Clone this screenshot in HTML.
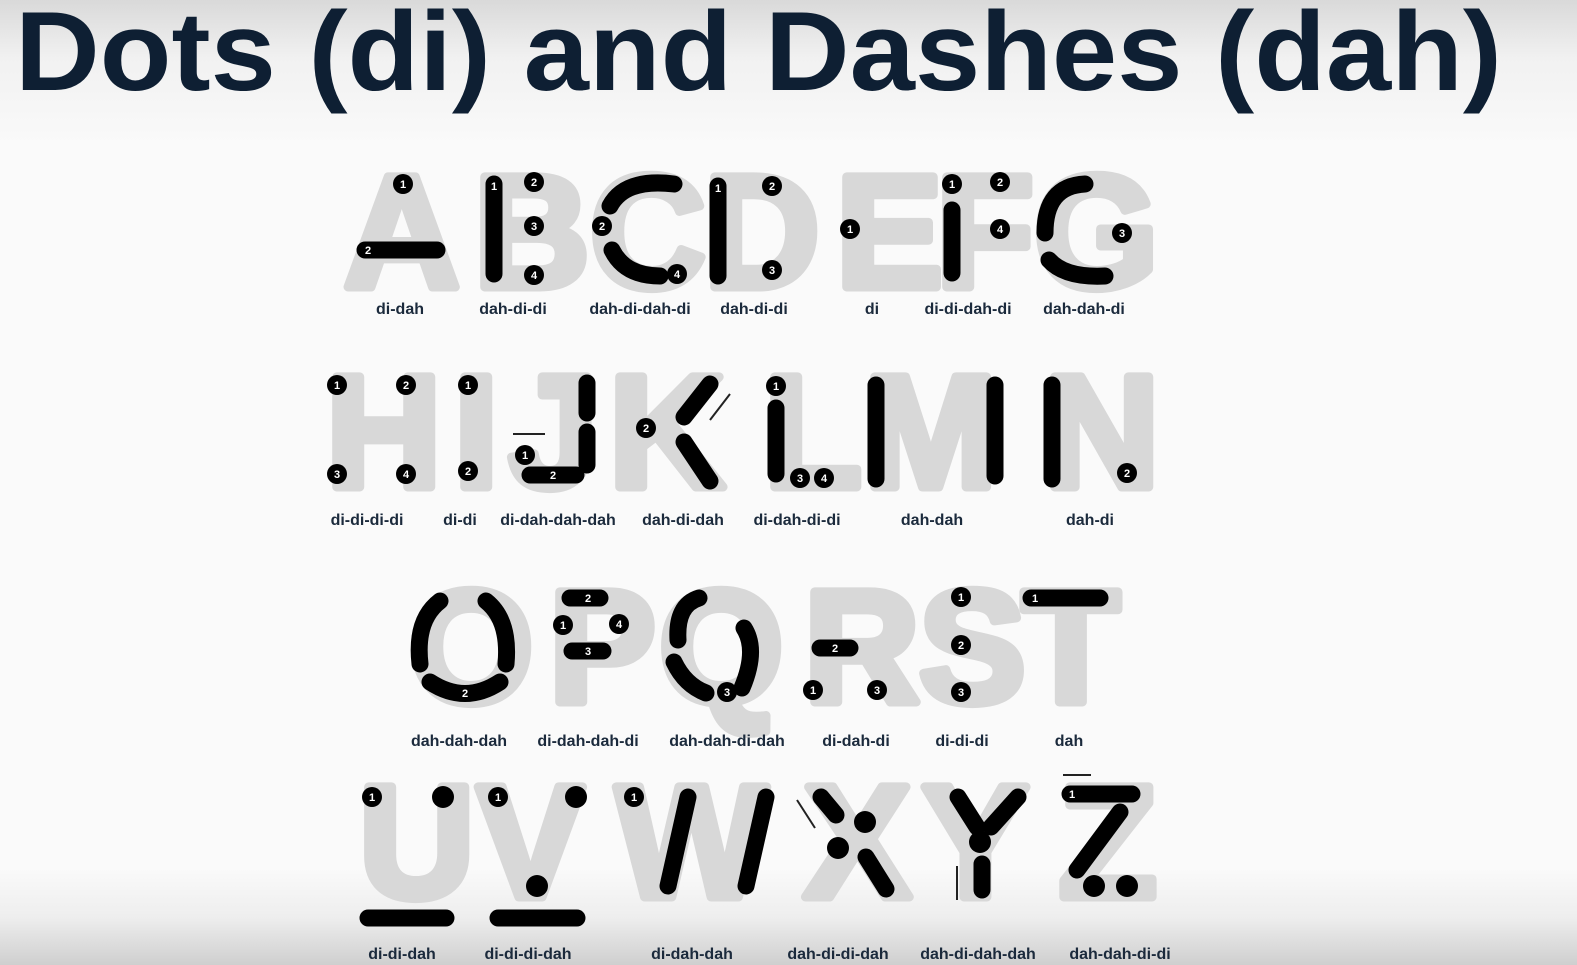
<!DOCTYPE html>
<html><head><meta charset="utf-8"><style>
html,body{margin:0;padding:0;width:1577px;height:965px;overflow:hidden;background:#f8f8f8}
svg{display:block}
</style></head><body>
<svg width="1577" height="965" viewBox="0 0 1577 965" xmlns="http://www.w3.org/2000/svg">
<defs>
<linearGradient id="bg" x1="0" y1="0" x2="0" y2="1">
<stop offset="0" stop-color="#d9d9d9"/><stop offset="0.06" stop-color="#f1f1f1"/><stop offset="0.15" stop-color="#fafafa"/>
<stop offset="0.9" stop-color="#fafafa"/><stop offset="0.95" stop-color="#eeeeee"/><stop offset="1" stop-color="#cfcfcf"/>
</linearGradient>
</defs>
<rect width="1577" height="965" fill="url(#bg)"/>
<text x="15" y="90" font-family="Liberation Sans, sans-serif" font-weight="bold" font-size="112" fill="#0e1f33" textLength="1487" lengthAdjust="spacingAndGlyphs">Dots (di) and Dashes (dah)</text>

<g font-family="Liberation Sans, sans-serif" font-weight="bold" font-size="160" fill="#d8d8d8" stroke="#d8d8d8" stroke-width="9" stroke-linejoin="round" lengthAdjust="spacingAndGlyphs">
<text x="344" y="287" textLength="118">A</text><text x="474" y="287" textLength="98">B</text><text x="590" y="287" textLength="100">C</text><text x="704" y="287" textLength="95">D</text><text x="836" y="287" textLength="81">E</text><text x="936" y="287" textLength="86">F</text><text x="1034" y="287" textLength="103">G</text>
<text x="326" y="487" textLength="93">H</text><text x="454" y="487" textLength="29">I</text><text x="509" y="487" textLength="88">J</text><text x="609" y="487" textLength="111">K</text><text x="764" y="487" textLength="75">L</text><text x="864" y="487" textLength="148">M</text><text x="1044" y="487" textLength="99">N</text>
<text x="409" y="702" textLength="110">O</text><text x="549" y="702" textLength="90">P</text><text x="659" y="702" textLength="110">Q</text><text x="804" y="702" textLength="91">R</text><text x="919" y="702" textLength="81">S</text><text x="1022" y="702" textLength="88">T</text>
<text x="359" y="897" textLength="100">U</text><text x="477" y="897" textLength="117">V</text><text x="616" y="897" textLength="183">W</text><text x="804" y="897" textLength="101">X</text><text x="922" y="897" textLength="117">Y</text><text x="1059" y="897" textLength="83">Z</text>
</g>

<g stroke="#000" stroke-width="17" stroke-linecap="round" fill="none">
<line x1="365" y1="250" x2="437" y2="250"/>
<line x1="494" y1="184" x2="494" y2="274"/>
<path d="M610,206 Q625,178 674,184"/><path d="M612,250 Q625,276 660,276"/>
<line x1="718" y1="186" x2="718" y2="276"/>
<line x1="952" y1="210" x2="952" y2="273"/>
<path d="M1085,184 Q1045,186 1045,233"/><path d="M1049,260 Q1065,278 1105,276"/>
<line x1="530" y1="475" x2="576" y2="475"/>
<line x1="587" y1="383" x2="587" y2="413"/><line x1="587" y1="432" x2="587" y2="465"/>
<line x1="710" y1="384" x2="684" y2="417"/><line x1="684" y1="442" x2="710" y2="481"/>
<line x1="776" y1="408" x2="776" y2="474"/>
<line x1="876" y1="385" x2="876" y2="479"/><line x1="995" y1="385" x2="995" y2="476"/>
<line x1="1052" y1="385" x2="1052" y2="479"/>
<path d="M440,601 Q415,620 420,664"/><path d="M486,601 Q510,620 506,664"/><path d="M430,682 Q465,705 500,682"/>
<line x1="570" y1="598" x2="600" y2="598"/><line x1="572" y1="651" x2="603" y2="651"/>
<path d="M699,598 Q676,605 678,640"/><path d="M744,628 Q758,650 742,688"/><path d="M674,662 Q685,685 706,693"/>
<line x1="820" y1="648" x2="850" y2="648"/>
<line x1="1031" y1="598" x2="1100" y2="598"/>
<line x1="368" y1="918" x2="446" y2="918"/><line x1="498" y1="918" x2="577" y2="918"/>
<line x1="688" y1="797" x2="668" y2="886"/><line x1="766" y1="797" x2="746" y2="886"/>
<line x1="821" y1="797" x2="836" y2="815"/><line x1="866" y1="857" x2="886" y2="889"/>
<line x1="958" y1="797" x2="977" y2="827"/><line x1="1018" y1="797" x2="991" y2="827"/><line x1="982" y1="864" x2="982" y2="890"/>
<line x1="1070" y1="794" x2="1132" y2="794"/><line x1="1120" y1="812" x2="1077" y2="870"/>
</g>
<g stroke="#222" stroke-width="2" fill="none">
<line x1="513" y1="434" x2="545" y2="434"/><line x1="730" y1="394" x2="710" y2="420"/>
<line x1="797" y1="800" x2="815" y2="828"/><line x1="957" y1="900" x2="957" y2="866"/><line x1="1063" y1="775" x2="1091" y2="775"/>
</g>

<g fill="#000">
<circle cx="403" cy="184" r="10"/><circle cx="534" cy="182" r="10"/><circle cx="534" cy="226" r="10"/><circle cx="534" cy="275" r="10"/>
<circle cx="602" cy="226" r="10"/><circle cx="677" cy="274" r="10"/><circle cx="772" cy="186" r="10"/><circle cx="772" cy="270" r="10"/>
<circle cx="850" cy="229" r="10"/><circle cx="952" cy="184" r="10"/><circle cx="1000" cy="182" r="10"/><circle cx="1000" cy="229" r="10"/><circle cx="1122" cy="233" r="10"/>
<circle cx="337" cy="385" r="10"/><circle cx="406" cy="385" r="10"/><circle cx="337" cy="474" r="10"/><circle cx="406" cy="474" r="10"/>
<circle cx="468" cy="385" r="10"/><circle cx="468" cy="471" r="10"/><circle cx="525" cy="455" r="10"/><circle cx="646" cy="428" r="10"/>
<circle cx="776" cy="386" r="10"/><circle cx="800" cy="478" r="10"/><circle cx="824" cy="478" r="10"/><circle cx="1127" cy="473" r="10"/>
<circle cx="563" cy="625" r="10"/><circle cx="619" cy="624" r="10"/><circle cx="727" cy="692" r="10"/><circle cx="813" cy="690" r="10"/><circle cx="877" cy="690" r="10"/>
<circle cx="961" cy="597" r="10"/><circle cx="961" cy="645" r="10"/><circle cx="961" cy="692" r="10"/>
<circle cx="372" cy="797" r="10"/><circle cx="443" cy="797" r="11"/><circle cx="498" cy="797" r="10"/><circle cx="576" cy="797" r="11"/><circle cx="537" cy="886" r="11"/>
<circle cx="634" cy="797" r="10"/><circle cx="865" cy="822" r="11"/><circle cx="838" cy="848" r="11"/><circle cx="980" cy="842" r="11"/>
<circle cx="1094" cy="886" r="11"/><circle cx="1127" cy="886" r="11"/>
</g>
<g fill="#fff" font-family="Liberation Sans, sans-serif" font-weight="bold" font-size="11" text-anchor="middle">
<text x="403" y="188">1</text><text x="534" y="186">2</text><text x="534" y="230">3</text><text x="534" y="279">4</text><text x="368" y="254">2</text><text x="494" y="190">1</text>
<text x="602" y="230">2</text><text x="677" y="278">4</text><text x="772" y="190">2</text><text x="772" y="274">3</text><text x="718" y="192">1</text>
<text x="850" y="233">1</text><text x="952" y="188">1</text><text x="1000" y="186">2</text><text x="1000" y="233">4</text><text x="1122" y="237">3</text>
<text x="337" y="389">1</text><text x="406" y="389">2</text><text x="337" y="478">3</text><text x="406" y="478">4</text>
<text x="468" y="389">1</text><text x="468" y="475">2</text><text x="525" y="459">1</text><text x="646" y="432">2</text><text x="553" y="479">2</text>
<text x="776" y="390">1</text><text x="800" y="482">3</text><text x="824" y="482">4</text><text x="1127" y="477">2</text>
<text x="563" y="629">1</text><text x="619" y="628">4</text><text x="727" y="696">3</text><text x="813" y="694">1</text><text x="877" y="694">3</text>
<text x="961" y="601">1</text><text x="961" y="649">2</text><text x="961" y="696">3</text><text x="588" y="602">2</text><text x="588" y="655">3</text><text x="835" y="652">2</text><text x="1035" y="602">1</text>
<text x="372" y="801">1</text><text x="498" y="801">1</text><text x="634" y="801">1</text><text x="1072" y="798">1</text><text x="465" y="697">2</text>
</g>

<g font-family="Liberation Sans, sans-serif" font-weight="bold" font-size="16" fill="#1b2a3c" text-anchor="middle">
<text x="400" y="314">di-dah</text><text x="513" y="314">dah-di-di</text><text x="640" y="314">dah-di-dah-di</text><text x="754" y="314">dah-di-di</text><text x="872" y="314">di</text><text x="968" y="314">di-di-dah-di</text><text x="1084" y="314">dah-dah-di</text>
<text x="367" y="525">di-di-di-di</text><text x="460" y="525">di-di</text><text x="558" y="525">di-dah-dah-dah</text><text x="683" y="525">dah-di-dah</text><text x="797" y="525">di-dah-di-di</text><text x="932" y="525">dah-dah</text><text x="1090" y="525">dah-di</text>
<text x="459" y="746">dah-dah-dah</text><text x="588" y="746">di-dah-dah-di</text><text x="727" y="746">dah-dah-di-dah</text><text x="856" y="746">di-dah-di</text><text x="962" y="746">di-di-di</text><text x="1069" y="746">dah</text>
<text x="402" y="959">di-di-dah</text><text x="528" y="959">di-di-di-dah</text><text x="692" y="959">di-dah-dah</text><text x="838" y="959">dah-di-di-dah</text><text x="978" y="959">dah-di-dah-dah</text><text x="1120" y="959">dah-dah-di-di</text>
</g>
</svg>
</body></html>
